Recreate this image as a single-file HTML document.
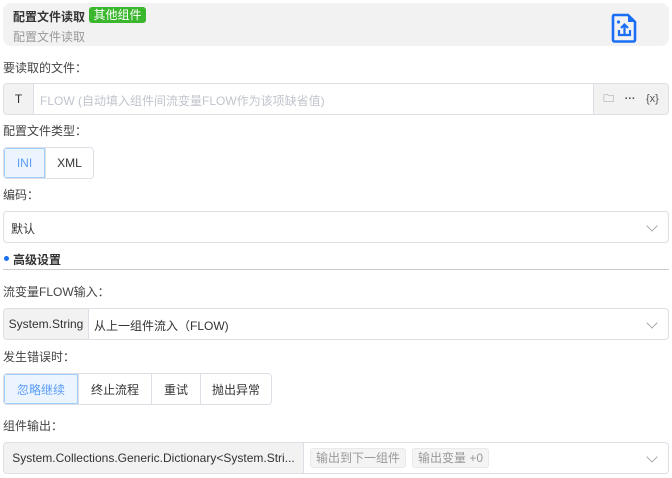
<!DOCTYPE html>
<html><head><meta charset="utf-8"><style>
*{box-sizing:border-box;margin:0;padding:0}
body{width:672px;height:478px;background:#fff;font-family:"Liberation Sans","Noto Sans CJK SC",sans-serif;font-size:12px;color:#333;position:relative;overflow:hidden}
.a{position:absolute}
.lbl{position:absolute;left:3px;font-size:12px;color:#444;line-height:14px}
.box{position:absolute;left:3px;width:666px;height:32px;border:1px solid #dcdfe6;border-radius:4px;background:#fff;overflow:hidden}
.add{position:absolute;top:0;bottom:0;left:0;background:#f2f2f2;border-right:1px solid #dcdfe6;display:flex;align-items:center;justify-content:center;color:#333}
.chev{position:absolute;right:12px;top:10px;width:8px;height:8px;border-right:1px solid #aaa;border-bottom:1px solid #aaa;transform:rotate(45deg)}
.btns{position:absolute;display:flex;height:32px;border:1px solid #dcdfe6;border-radius:4px;overflow:hidden}
.btns div{flex:none;display:flex;align-items:center;justify-content:center;border-left:1px solid #dcdfe6;color:#333}
.btns div:first-child{border-left:none;background:#ecf5ff;color:#5a9cf8;box-shadow:inset 0 0 0 1px #a0cfff}
.tag{display:inline-block;background:#f4f4f5;border:1px solid #e9e9eb;color:#999;border-radius:3px;padding:0 5px;height:20px;line-height:18px;margin-right:6px}
</style></head><body>
<div class="a" style="left:3px;top:3px;width:666px;height:43px;background:#f2f2f2;border-radius:8px"></div>
<div class="a" style="left:13px;top:8px;font-weight:bold;font-size:12px;color:#333">配置文件读取</div>
<div class="a" style="left:89px;top:7px;width:57px;height:16px;background:#3ab72d;color:#fff;border-radius:3px;font-size:12px;line-height:16px;text-align:center">其他组件</div>
<div class="a" style="left:13px;top:28px;color:#999">配置文件读取</div>
<svg class="a" style="left:611px;top:13px" width="27" height="30" viewBox="0 0 27 30"><path d="M3 2h14l7 7v18a1.5 1.5 0 0 1-1.5 1.5h-19A1.5 1.5 0 0 1 2 27V3.5A1.5 1.5 0 0 1 3 2z" fill="none" stroke="#1a6ff5" stroke-width="2.6"/><path d="M17 2v7h7" fill="#1a6ff5"/><circle cx="7.5" cy="9" r="1.6" fill="#1a6ff5"/><path d="M8 17v5h11v-5M13.5 21v-9M10 15l3.5-3.5L17 15" fill="none" stroke="#1a6ff5" stroke-width="2.2"/></svg>

<div class="lbl" style="top:61px">要读取的文件：</div>
<div class="box" style="top:83px">
<div class="add" style="width:30px">T</div>
<div class="a" style="left:36px;top:8px;color:#c0c4cc">FLOW (自动填入组件间流变量FLOW作为该项缺省值)</div>
<div class="add" style="left:auto;right:0;width:75px;border-right:none;border-left:1px solid #dcdfe6;justify-content:space-around;padding:0 4px;color:#555;font-size:11px"><span>🗀</span><span style="font-weight:bold">···</span><span>{x}</span></div>
</div>

<div class="lbl" style="top:124px">配置文件类型：</div>
<div class="btns" style="left:3px;top:147px;width:91px"><div style="width:41px">INI</div><div style="width:48px">XML</div></div>

<div class="lbl" style="top:188px">编码：</div>
<div class="box" style="top:211px"><div class="a" style="left:7px;top:8px">默认</div><div class="chev"></div></div>

<div class="a" style="left:4px;top:256px;width:5px;height:5px;border-radius:50%;background:#1a6ff5"></div>
<div class="a" style="left:13px;top:251px;font-weight:bold;color:#333">高级设置</div>
<div class="a" style="left:3px;top:269px;width:666px;height:1px;background:#ccc"></div>

<div class="lbl" style="top:285px">流变量FLOW输入：</div>
<div class="box" style="top:308px"><div class="add" style="width:85px">System.String</div><div class="a" style="left:90px;top:8px">从上一组件流入（FLOW)</div><div class="chev"></div></div>

<div class="lbl" style="top:350px">发生错误时：</div>
<div class="btns" style="left:3px;top:373px;width:269px"><div style="width:74px">忽略继续</div><div style="width:73px">终止流程</div><div style="width:49px">重试</div><div style="width:71px">抛出异常</div></div>

<div class="lbl" style="top:419px">组件输出：</div>
<div class="box" style="top:442px"><div class="add" style="width:300px">System.Collections.Generic.Dictionary&lt;System.Stri...</div>
<div class="a" style="left:306px;top:5px;display:flex"><span class="tag">输出到下一组件</span><span class="tag">输出变量 +0</span></div><div class="chev"></div></div>
</body></html>
